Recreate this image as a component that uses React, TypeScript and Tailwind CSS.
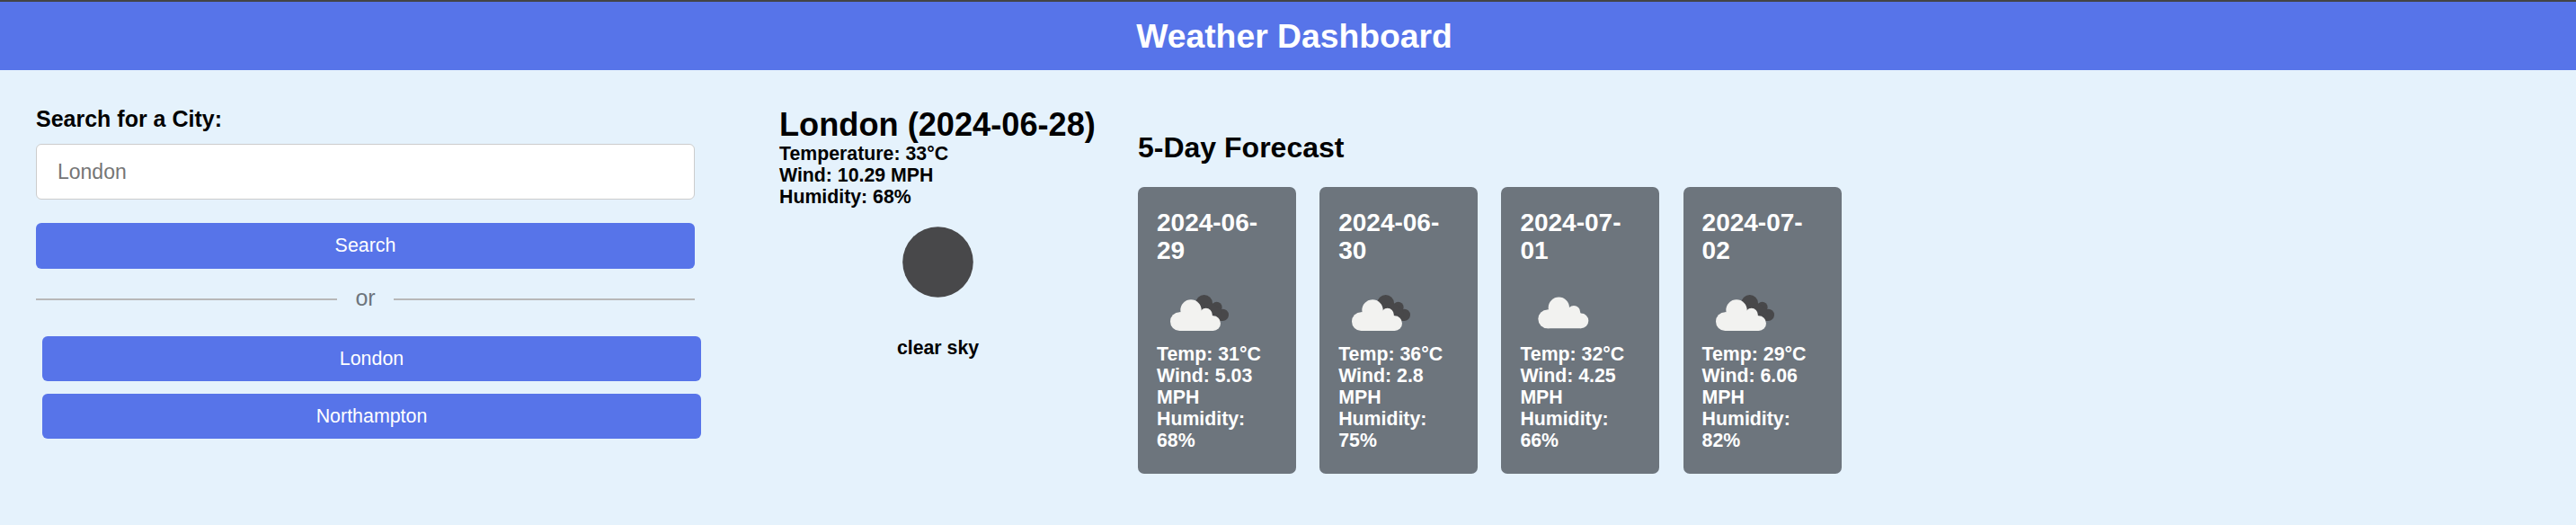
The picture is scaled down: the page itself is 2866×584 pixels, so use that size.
type Sky = 'broken' | 'scattered';

interface Day {
  date: string;
  sky: Sky;
  temp: number;
  wind: number;
  humidity: number;
}

const days: Day[] = [
  { date: '2024-06-29', sky: 'broken', temp: 31, wind: 5.03, humidity: 68 },
  { date: '2024-06-30', sky: 'broken', temp: 36, wind: 2.8, humidity: 75 },
  { date: '2024-07-01', sky: 'scattered', temp: 32, wind: 4.25, humidity: 66 },
  { date: '2024-07-02', sky: 'broken', temp: 29, wind: 6.06, humidity: 82 },
];

function CloudShape() {
  return (
    <>
      <circle cx="97" cy="143" r="31" />
      <circle cx="135" cy="105" r="35" />
      <circle cx="185" cy="120" r="21.5" />
      <circle cx="209" cy="149" r="25" />
      <path d="M97 112H150L185 104L209 125V174H97Z" />
    </>
  );
}

function SkyIcon({ sky }: { sky: Sky }) {
  if (sky === 'scattered') {
    return (
      <svg className="block h-[70px] w-[114px]" viewBox="3 0 342 210">
        <g transform="translate(-2 -8.5)" fill="#f2f2f0">
          <CloudShape />
        </g>
      </svg>
    );
  }
  return (
    <svg className="block h-[70px] w-[114px]" viewBox="21 0 342 210">
      <g fill="#48484a">
        <circle cx="179" cy="82" r="28" />
        <circle cx="221" cy="95" r="18" />
        <circle cx="241" cy="121" r="20" />
        <path d="M160 82H205L236 103L241 141H200Z" />
      </g>
      <g fill="#f2f2f0">
        <CloudShape />
      </g>
    </svg>
  );
}

function ForecastCard({ day }: { day: Day }) {
  return (
    <article className="h-[319px] w-[176px] rounded-[7px] bg-[#6d757d] px-[21px] pt-6 font-bold text-white">
      <h3 className="text-[28px] leading-[31px]">{day.date}</h3>
      <div className="h-[88px] pt-4">
        <SkyIcon sky={day.sky} />
      </div>
      <div className="text-[21.3px] leading-6">
        <p>Temp: {day.temp}°C</p>
        <p>Wind: {day.wind} MPH</p>
        <p>Humidity: {day.humidity}%</p>
      </div>
    </article>
  );
}

export default function App() {
  return (
    <div className="h-[584px] w-full overflow-hidden bg-[#e5f2fc] font-['Liberation_Sans',Arial,sans-serif] text-black">
      <header className="flex h-[78px] items-center justify-center border-t-2 border-[#434446] bg-[#5774e9]">
        <h1 className="pl-[14px] text-[37.3px] leading-10 font-bold text-white">Weather Dashboard</h1>
      </header>

      <main className="flex">
        <aside className="w-[740px] shrink-0 pt-10 pl-10">
          <h2 className="text-[25px] leading-7 font-bold">Search for a City:</h2>
          <input
            className="mt-[14px] block h-[62px] w-[733px] rounded-[6px] border border-[#cccccc] bg-white px-[23px] text-[23px] placeholder:text-[#757575] placeholder:opacity-100"
            placeholder="London"
          />
          <button className="mt-[26px] block h-[51px] w-[733px] rounded-[6px] bg-[#5774e9] text-[21.4px] text-white">
            Search
          </button>
          <div className="mt-[17px] flex h-[30px] w-[733px] items-center">
            <div className="mt-1 h-[2px] flex-1 bg-[#b8b8b8]" />
            <span className="w-[63px] text-center text-[25px] leading-[30px] text-[#6d757d]">or</span>
            <div className="mt-1 h-[2px] flex-1 bg-[#b8b8b8]" />
          </div>
          <div className="mt-7 ml-[7px] flex w-[733px] flex-col gap-[14px]">
            {['London', 'Northampton'].map((city) => (
              <button key={city} className="h-[50px] rounded-[6px] bg-[#5774e9] text-[21.4px] text-white">
                {city}
              </button>
            ))}
          </div>
        </aside>

        <section className="ml-[127px] w-[353px] shrink-0 pt-10 font-bold">
          <h2 className="text-[36.2px] leading-[41px] whitespace-nowrap">London (2024-06-28)</h2>
          <div className="text-[21.3px] leading-6">
            <p>Temperature: 33°C</p>
            <p>Wind: 10.29 MPH</p>
            <p>Humidity: 68%</p>
          </div>
          <svg className="mx-auto mt-[21px] block size-[79px]" viewBox="0 0 79 79">
            <circle cx="39.5" cy="39.5" r="39.3" fill="#48484a" />
          </svg>
          <p className="mt-[44px] text-center text-[21.3px] leading-6">clear sky</p>
        </section>

        <section className="ml-[46px] pt-[66px]">
          <h2 className="text-[32px] leading-10 font-bold">5-Day Forecast</h2>
          <div className="mt-6 flex gap-[26.2px]">
            {days.map((day) => (
              <ForecastCard key={day.date} day={day} />
            ))}
          </div>
        </section>
      </main>
    </div>
  );
}
